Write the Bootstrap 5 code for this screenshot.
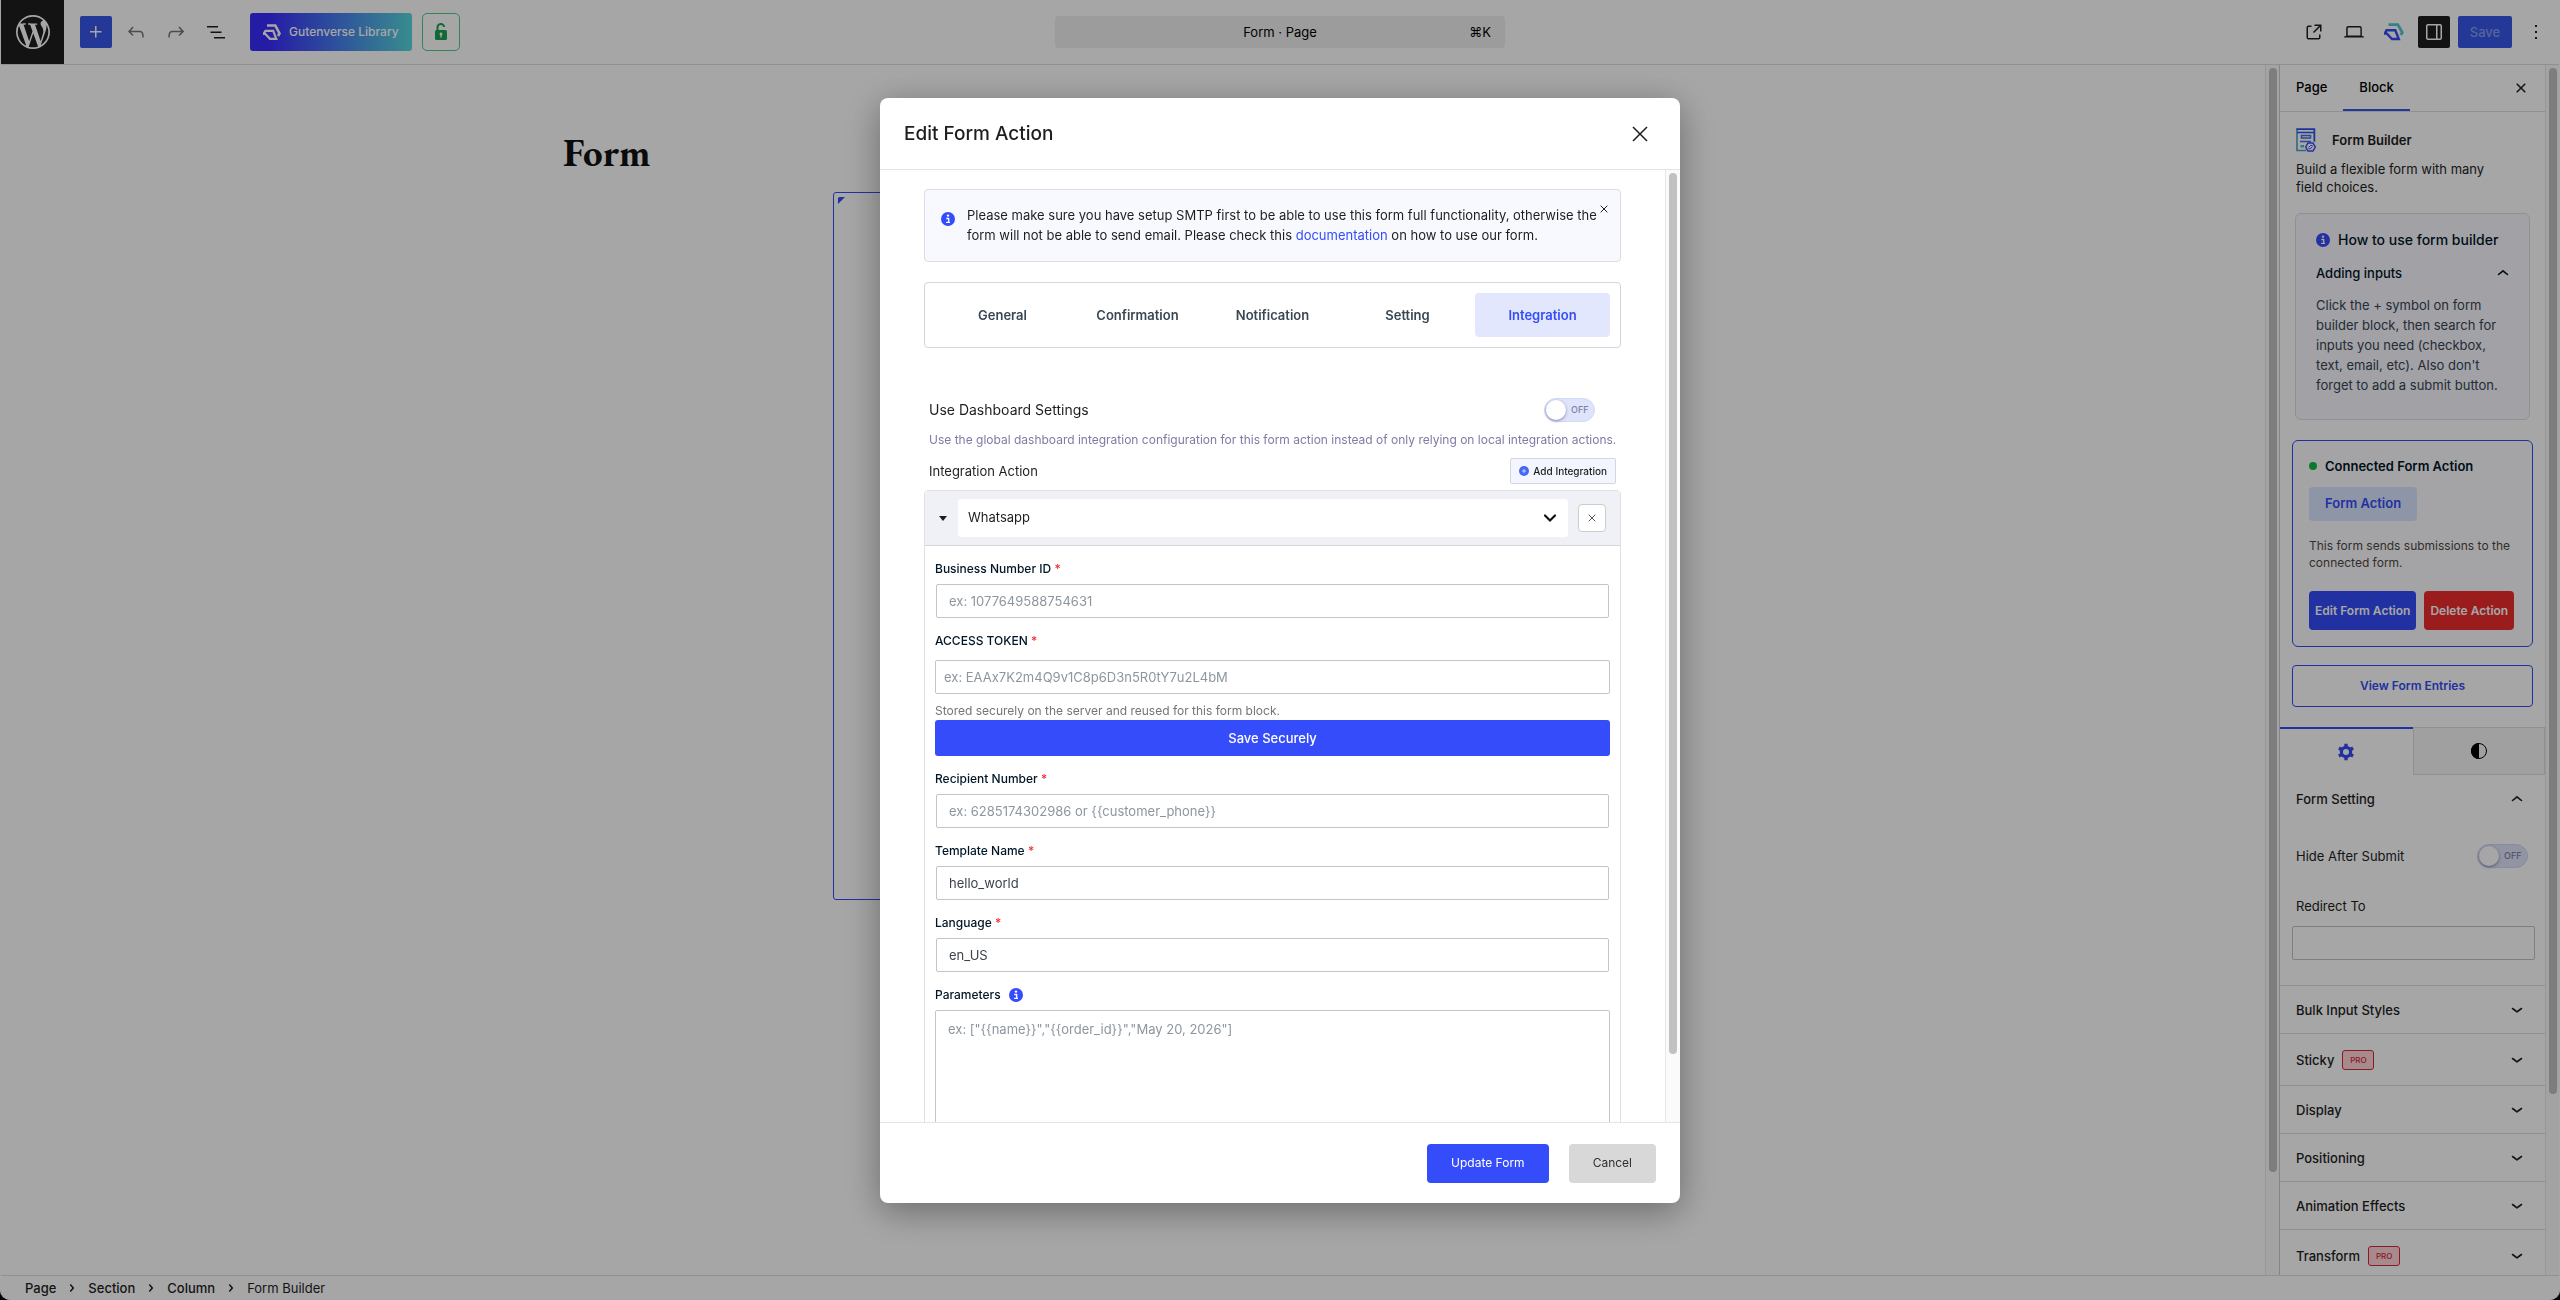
<!DOCTYPE html>
<html lang="en">
<head>
<meta charset="utf-8">
<meta name="viewport" content="width=device-width, initial-scale=1">
<title>Form · Page</title>
<link href="https://cdn.jsdelivr.net/npm/bootstrap@5.3.0/dist/css/bootstrap.min.css" rel="stylesheet">
<style>
:root { --wp-blue:#3858e9; --gv-blue:#344cf9; --line:#ddd; --ink:#1e1e1e; }
html, body { height:100%; }
body { background:#000; font-family:Inter, "Liberation Sans", sans-serif; font-size:13px; line-height:18px; color:var(--ink); }
button, input, select, textarea { font-family:inherit; }
.app-window { background:#fff; border-radius:0 0 10px 10px; border:1px solid #fff; border-width:0 1px; overflow:hidden; }
svg { display:block; flex:none; }
.side-even { flex:1 1 0; min-width:0; }

/* top bar */
.topbar { height:65px; border-bottom:1px solid var(--line); }
.wp-home { width:63px; height:64px; background:var(--ink); color:#fff; }
.tool { width:32px; height:32px; padding:0; border:0; border-radius:2px; display:flex; align-items:center; justify-content:center; color:var(--ink); background:none; }
.tool-blue { background:var(--wp-blue); color:#fff; }
.tool-dark { background:var(--ink); color:#fff; }
.tool-dim { color:#757575; }
.library-btn { height:38px; margin-left:18px; padding:0 13px; border:0; border-radius:3px; color:#fff; background:linear-gradient(90deg,#3a2cff 12%,#56d8dc); font:500 12px/20px Inter, sans-serif; gap:8px; }
.lock-btn { width:38px; height:38px; margin-left:10px; border:1px solid #55c987; border-radius:5px; color:#1ba354; padding:0; background:none; }
.doc-bar { width:450px; height:32px; background:#f0f0f0; border:0; border-radius:4px; padding:0 14px; font-size:13px; }
.save-btn { width:54px; height:32px; border:0; border-radius:2px; background:var(--wp-blue); color:#8599f2; font-size:13px; font-weight:500; padding:0; }
.tools-end > :last-child { margin-right:7px; }

/* canvas */
.page-title { font-family:"EB Garamond","Liberation Serif",serif; font-weight:700; font-size:39px; line-height:48px; margin:64px 0 0 562px; color:#111; }
.form-block { width:815px; height:708px; margin:15px 0 0 832px; border:1px solid var(--gv-blue); border-radius:3px; padding:4px; }
.rail { background:#fafafa; border-left:1px solid #e8e8e8; width:14px; padding-top:3px; flex:none; }
.rail > div { width:8px; margin-left:3px; border-radius:4px; background:#c1c1c1; }

/* settings sidebar */
.settings { width:266px; border-left:1px solid #ccc; flex:none; }
.side-tabs { height:47px; border-bottom:1px solid var(--line); padding-right:12px; }
.side-tabs .side-tab { border:0; background:none; padding:0 16px; height:46px; font-size:13px; font-weight:500; border-bottom:2px solid transparent; }
.side-tabs .side-tab.active { border-color:var(--wp-blue); }
.side-pad { padding:16px 16px 0; }
.block-name { height:24px; }
.howto { margin:17px 15px 0; padding:16px 20px 24px; background:#f8f8ff; border:1px solid #dcdce4; border-radius:6px; }
.howto h3 { font-size:14px; font-weight:500; line-height:20px; margin:0; color:#011627; white-space:nowrap; }
.howto button { border:0; background:none; padding:0; margin-top:13px; line-height:20px; font-weight:500; color:#011627; }
.howto p { margin:12px 0 0; line-height:20px; color:#364553; }
.connected { margin:20px 12px 0; padding:16px; border:1px solid var(--gv-blue); border-radius:6px; background:#fcfcff; }
.connected h3 { font-size:13px; line-height:18px; font-weight:600; margin:0; color:#011627; }
.live-dot { width:8px; height:8px; border-radius:50%; background:#0fbe3e; }
.chip { display:inline-block; margin-top:12px; height:34px; line-height:33px; padding:0 16px; background:#dbe5ff; border-radius:4px; color:var(--gv-blue); font-weight:600; }
.connected p { margin:16px 0 20px; font-size:12px; line-height:17px; color:#50483f; }
.act { height:39px; border:0; border-radius:4px; color:#fff; font-size:12px; font-weight:600; padding:0 6px; white-space:nowrap; }
.act-blue { background:var(--gv-blue); }
.act-red { background:#ef2b2b; }
.entries { display:block; margin:18px 12px 20px; height:42px; line-height:40px; border:1px solid var(--gv-blue); border-radius:4px; text-align:center; text-decoration:none; color:var(--gv-blue); font-size:12px; font-weight:600; }
.mode-tab { height:48px; border:1px solid var(--line); background:#f6f6f6; padding:0; display:flex; align-items:center; justify-content:center; color:#000; }
.mode-tab.active { background:none; border:0; border-top:2px solid var(--gv-blue); color:var(--gv-blue); }
.fold { width:100%; height:48px; border:0; background:none; padding:0 20px 0 16px; font-size:13px; font-weight:500; text-align:left; color:var(--ink); flex:none; }
.fold + .fold, .ruled { border-top:1px solid var(--line); }
.fold.tall { height:52px; }
.pro { height:20px; width:32px; border:1px solid #d9263a; border-radius:3px; background:#ffd5d8; color:#d9263a; font-size:8px; line-height:18px; text-align:center; }
.switch-row { margin:21px 17px 0 16px; height:24px; }
.switch { width:51px; height:24px; border-radius:12px; background:#dfe3fb; display:flex; align-items:center; position:relative; color:#7d84a4; font-size:9px; font-weight:500; cursor:pointer; padding-left:26px; border:1px solid #d3d8f3; }
.switch input { appearance:none; position:absolute; left:1px; top:1px; width:20px; height:20px; margin:0; border-radius:50%; background:#fff; box-shadow:0 1px 3px rgba(60,70,130,.6); }
.plain-box { height:34px; border:1px solid #c3c4c7; border-radius:2px; font-size:13px; line-height:18px; padding:7px 13px; color:#3c434a; background:#fff; }
.redirect { margin:29px 10px 25px 12px; }
.redirect label { margin:0 0 11px 4px; }

/* footer trail */
.trail { height:25px; border-top:1px solid var(--line); padding-left:24px; gap:10px; font-size:13px; font-weight:500; flex:none; }
.trail a { color:var(--ink); text-decoration:none; }

/* dialog */
.modal { background:rgba(0,0,0,.35); border-radius:0 0 10px 10px; overflow:hidden; }
.modal-dialog { max-width:800px; height:calc(100% - 195px); margin-top:98px; }
.modal-content { height:100%; border:0; border-radius:8px; box-shadow:0 8px 36px rgba(0,0,0,.36); color:var(--ink); }
.modal-header { height:72px; padding:0 28px 0 24px; border-color:#e4e4e4; flex:none; }
.modal-title { font-size:19px; font-weight:500; line-height:28px; }
.bare { border:0; background:none; padding:0; color:inherit; }
.modal-body { padding:0; overflow:hidden; display:flex; min-height:0; }
.dialog-main { flex:1; min-width:0; overflow:hidden; padding:19px 44px 0; }
.dialog-main + .rail { width:15px; }
.notice { position:relative; border:1px solid #dcdce4; border-radius:4px; background:#f8f9ff; padding:15px 16px 16px; gap:12px; }
.notice > svg { margin-top:7px; }
.notice p { margin:0; line-height:20px; flex:1; white-space:nowrap; }
.notice a { color:var(--gv-blue); text-decoration:none; }
.notice .bare { position:absolute; top:15px; right:12px; }
.tab-set { margin-top:20px; padding:10px; border:1px solid #d5d5de; border-radius:4px; height:66px; flex-wrap:nowrap; }
.tab-set .nav-link { flex:1; height:44px; padding:0; border-radius:4px; font-size:13px; font-weight:600; color:#394653; }
.tab-set .nav-link.active { background:#e2e7fe; color:var(--gv-blue); }
.dash-row { margin-top:50px; padding:0 26px 0 5px; height:24px; }
.dash-row label.title { font-size:14px; line-height:20px; }
.hint { margin:9px 5px 0; font-size:12px; color:#7e7ba3; white-space:nowrap; }
.add-row { margin:9px 5px 0; }
.add-btn { height:26px; border:1px solid #d5d5de; background:#f3f5ff; border-radius:2px; font-size:10px; font-weight:500; padding:0 8px; gap:4px; color:var(--ink); }
.panel-box { margin-top:6px; border:1px solid #dfdfe4; border-radius:4px 4px 0 0; }
.panel-top { height:55px; background:#f0f1f6; border-bottom:1px solid #d5d5de; padding:0 14px 0 13px; }
.panel-top .pick { margin:0 10px; }
.panel-top .form-select { height:38px; border:0; border-radius:3px; font-size:13px; padding:0 10px; background-image:none; color:var(--ink); }
.sel-arrow { position:absolute; right:11px; top:12px; pointer-events:none; }
.remove { width:28px; height:28px; border:1px solid #ccc; border-radius:4px; background:#fff; color:#555; padding:0; display:flex; align-items:center; justify-content:center; }
.fields { padding:14px 10px 0; }
.fields .form-label { display:block; margin:0 0 6px; font-size:12px; line-height:18px; font-weight:500; color:#011627; }
.fields .form-label.roomy { margin-bottom:10px; }
.fields .form-label span { color:#f03030; }
.fields .form-control { margin-bottom:14px; }
.fields .inset { width:calc(100% - 2px); margin-left:1px; padding-left:12px; }
.fields .form-control::placeholder { color:#8d969f; opacity:1; }
.fields textarea.form-control { height:150px; resize:none; padding:9px 12px; }
.fields .snug { margin:-6px 0 0; font-size:12px; color:#757575; }
.fields .token { padding-left:8px; }
.fields .tip { margin-top:2px; }
.secure { width:100%; height:36px; border:0; border-radius:3px; background:var(--gv-blue); color:#fff; font-size:13px; font-weight:500; margin-bottom:14px; }
.modal-footer { height:81px; padding:0 24px 0 0; gap:20px; border-color:#e4e4e4; flex:none; }
.foot-btn { height:39px; padding:0 24px; border:0; border-radius:4px; font-size:12px; margin:0; }
.foot-cancel { background:#d8d8d8; color:#2f2f2f; }
</style>
<script src="https://cdn.jsdelivr.net/npm/bootstrap@5.3.0/dist/js/bootstrap.bundle.min.js"></script>
</head>
<body>
<svg width="0" height="0" class="position-absolute" aria-hidden="true">
  <defs>
    <symbol id="i-down" viewBox="0 0 12 12"><path d="M1.500 4.500Q4 6.300 6 7.800Q8 6.300 10.500 4.500" fill="none" stroke="currentColor" stroke-width="1.600" stroke-linecap="round"/></symbol>
    <symbol id="i-up" viewBox="0 0 12 12"><path d="M1.500 7.500Q4 5.500 6 3.800Q8 5.500 10.500 7.500" fill="none" stroke="currentColor" stroke-width="1.600" stroke-linecap="round"/></symbol>
    <symbol id="i-info" viewBox="0 0 14 14"><circle cx="7" cy="7" r="7" fill="#344cf9"/><circle cx="7" cy="3.600" r="1.200" fill="#fff"/><path d="M5.300 6.500h2.400v3.500M5.100 10.300h3.900" fill="none" stroke="#fff" stroke-width="1.300"/></symbol>
    <symbol id="i-next" viewBox="6 6 12 12"><path fill="currentColor" d="M10.862 8.040l3.418 3.988-3.418 3.988-1.139-.976 2.582-3.012-2.582-3.011z"/></symbol>
    <symbol id="i-x" viewBox="0 0 12 12"><path d="M1 1l10 10M11 1L1 11" stroke="currentColor" stroke-width="1.500" fill="none"/></symbol>
  </defs>
</svg>

<div class="app-window vh-100 d-flex flex-column">
  <header class="topbar d-flex align-items-center flex-shrink-0">
    <div class="side-even d-flex align-items-center">
      <a href="#" class="wp-home d-flex align-items-center justify-content-center" aria-label="View Pages">
        <svg width="34" height="34" viewBox="0 0 24 24" fill="currentColor"><path d="M21.469 6.825c.84 1.537 1.318 3.3 1.318 5.175 0 3.979-2.156 7.456-5.363 9.325l3.295-9.527c.615-1.54.82-2.771.82-3.864 0-.405-.026-.78-.07-1.11m-7.981.105c.647-.03 1.232-.105 1.232-.105.582-.075.514-.93-.067-.899 0 0-1.755.135-2.88.135-1.064 0-2.85-.15-2.85-.15-.585-.03-.661.855-.075.885 0 0 .54.061 1.125.09l1.68 4.605-2.37 7.08L5.354 6.9c.649-.03 1.234-.1 1.234-.1.585-.075.516-.93-.065-.896 0 0-1.746.138-2.874.138-.2 0-.438-.008-.69-.015C4.911 3.15 8.235 1.215 12 1.215c2.809 0 5.365 1.072 7.286 2.833-.046-.003-.091-.009-.141-.009-1.06 0-1.812.923-1.812 1.914 0 .89.513 1.643 1.06 2.531.411.72.89 1.643.89 2.977 0 .915-.354 1.994-.821 3.479l-1.075 3.585-3.9-11.61.001.014zM12 22.784c-1.059 0-2.081-.153-3.048-.437l3.237-9.406 3.315 9.087c.024.053.05.101.078.149-1.12.393-2.325.609-3.582.609M1.211 12c0-1.564.336-3.05.935-4.39L7.29 21.709C3.694 19.96 1.212 16.271 1.211 12M12 0C5.385 0 0 5.385 0 12s5.385 12 12 12 12-5.385 12-12S18.615 0 12 0"/></svg>
      </a>
      <div class="d-flex align-items-center gap-2 ms-3">
        <button class="tool tool-blue" aria-label="Block inserter"><svg width="24" height="24" viewBox="0 0 24 24" fill="currentColor"><path d="M11 12.500V17.500H12.500V12.500H17.500V11H12.500V6H11V11H6V12.500H11Z"/></svg></button>
        <button class="tool tool-dim" aria-label="Undo"><svg width="24" height="24" viewBox="0 0 24 24" fill="currentColor"><path d="M18.3 11.7c-.6-.6-1.4-.9-2.3-.9H6.7l2.900-3.300-1.100-1-4.500 5L8.500 16l1-1-2.700-2.700H16c.5 0 .9.2 1.300.5 1 1 1 3.400 1 4.500v.3h1.500v-.2c0-1.500 0-4.300-1.500-5.700z"/></svg></button>
        <button class="tool tool-dim" aria-label="Redo"><svg width="24" height="24" viewBox="0 0 24 24" fill="currentColor"><path d="M15.6 6.500l-1.100 1 2.900 3.300H8c-.9 0-1.700.3-2.300.9-1.400 1.500-1.400 4.200-1.400 5.600v.2h1.500v-.3c0-1.100 0-3.500 1-4.500.3-.3.7-.5 1.300-.5h9.200L14.500 15l1.100 1.100 4.600-4.600-4.600-5z"/></svg></button>
        <button class="tool" aria-label="Document overview"><svg width="24" height="24" viewBox="0 0 24 24" fill="currentColor"><path d="M3 6h11v1.500H3V6Zm3.500 5.500h11V13h-11v-1.500ZM21 17H10v1.500h11V17Z"/></svg></button>
      </div>
      <button class="library-btn d-flex align-items-center"><svg width="18" height="17" viewBox="0 0 18 17" fill="none" stroke="#fff"><path d="M4 1.500H12.300L16.500 9.500L15 12" stroke-width="2.600"/><path d="M4.800 6.800H10.200L13.300 14.800H7L2.200 9.800H.5L2.500 6.800z" stroke-width="2.200"/></svg>Gutenverse Library</button>
      <button class="lock-btn d-flex align-items-center justify-content-center" aria-label="Unlock"><svg width="14" height="18" viewBox="0 0 14 18"><path d="M3.500 8V4.600a3.300 3.300 0 0 1 6.600-.6" fill="none" stroke="currentColor" stroke-width="2"/><rect x="1" y="7" width="12" height="10" rx="1.500" fill="currentColor"/><circle cx="7" cy="11" r="1.400" fill="#fff"/><path d="M7 11v3.500" stroke="#fff" stroke-width="1.300"/></svg></button>
    </div>
    <button class="doc-bar d-flex align-items-center"><span class="side-even"></span><span>Form · Page</span><span class="side-even text-end">⌘K</span></button>
    <div class="side-even tools-end d-flex align-items-center justify-content-end gap-2">
      <button class="tool" aria-label="View page"><svg width="24" height="24" viewBox="0 0 24 24" fill="currentColor"><path d="M19.500 4.500h-7V6h4.440l-5.970 5.970 1.060 1.060L18 7.060v4.440h1.500v-7Zm-13 1a2 2 0 0 0-2 2v10a2 2 0 0 0 2 2h10a2 2 0 0 0 2-2v-3H17v3a.5.5 0 0 1-.5.5h-10a.5.5 0 0 1-.5-.5v-10a.5.5 0 0 1 .5-.5h3V5.500h-3Z"/></svg></button>
      <button class="tool" aria-label="Preview"><svg width="24" height="24" viewBox="0 0 24 24" fill="currentColor"><path d="M20.500 16h-.7V8c0-1.100-.9-2-2-2H6.200c-1.100 0-2 .9-2 2v8h-.7c-.8 0-1.500.7-1.500 1.500h20c0-.8-.7-1.500-1.500-1.500zM5.700 8c0-.3.2-.5.5-.5h11.700c.3 0 .5.2.5.5v7.600H5.700V8z"/></svg></button>
      <button class="tool" aria-label="Gutenverse"><svg width="20" height="18" viewBox="0 0 20 18" fill="none"><path d="M4.500 1.600H13.800L18.300 9.500L16.800 12" stroke="#52c8cc" stroke-width="2.800"/><path d="M4.800 7.300H11.300L14.800 16H8L2.700 10.500H.8L2.500 7.300z" stroke="#344cf9" stroke-width="2.400"/></svg></button>
      <button class="tool tool-dark" aria-label="Settings"><svg width="24" height="24" viewBox="0 0 24 24" fill="currentColor"><path fill-rule="evenodd" d="M18 4H6c-1.100 0-2 .9-2 2v12c0 1.100.9 2 2 2h12c1.100 0 2-.9 2-2V6c0-1.100-.9-2-2-2zm-4 14.500H6c-.3 0-.5-.2-.5-.5V6c0-.3.2-.5.5-.5h8v13zm4.500-.5c0 .3-.2.5-.5.5h-2.500v-13H18c.3 0 .5.2.5.5v12z"/></svg></button>
      <button class="save-btn">Save</button>
      <button class="tool" aria-label="Options"><svg width="24" height="24" viewBox="0 0 24 24" fill="currentColor"><path d="M13 19h-2v-2h2v2zm0-6h-2v-2h2v2zm0-6h-2V5h2v2z"/></svg></button>
    </div>
  </header>

  <div class="d-flex flex-fill overflow-hidden">
    <main class="flex-fill overflow-hidden">
      <h1 class="page-title">Form</h1>
      <section class="form-block" aria-label="Form Builder"><svg width="7" height="7" viewBox="0 0 7 7"><path d="M0 7V1.500Q0 0 1.500 0H7z" fill="#344cf9"/></svg></section>
    </main>
    <div class="rail"><div style="height:91.500%"></div></div>

    <aside class="settings overflow-hidden d-flex flex-column">
      <div class="side-tabs d-flex align-items-center flex-shrink-0">
        <button class="side-tab">Page</button>
        <button class="side-tab active">Block</button>
        <button class="bare ms-auto" aria-label="Close settings"><svg width="24" height="24" viewBox="0 0 24 24" fill="currentColor"><path d="M12 13.060l3.712 3.713 1.061-1.060L13.061 12l3.712-3.712-1.060-1.060L12 10.938 8.288 7.227l-1.061 1.060L10.939 12l-3.712 3.712 1.060 1.061L12 13.061z"/></svg></button>
      </div>
      <div class="side-pad">
        <div class="block-name d-flex align-items-center gap-3">
          <svg width="20" height="24" viewBox="0 0 20 24" fill="none"><path d="M10 22.500H1V1h17.500V14" stroke="#4a9fd0" stroke-width="1.600"/><path d="M.5 1.200h18.500M1 4.500h17.500M18.300 1v12" stroke="#344cf9" stroke-width="1.500"/><path d="M5.500 7.500h9v2.500h-9zM4 13.500h11" stroke="#3f6fe6" stroke-width="1.500"/><path d="M4.500 17h3.500v2.500H4.500z" fill="#52b8cc"/><path d="M12 15h5l2.300 4-2.300 4h-5l-2.300-4z" stroke="#344cf9" stroke-width="1.500"/><path d="M12.500 19.500l2-2h2M16.500 18.500l-2 2.200h-2" stroke="#344cf9"/></svg>
          <span class="fw-semibold">Form Builder</span>
        </div>
        <div class="mt-2">Build a flexible form with many<br>field choices.</div>
      </div>
      <section class="howto">
        <div class="d-flex align-items-center gap-2"><svg width="14" height="14"><use href="#i-info"/></svg><h3>How to use form builder</h3></div>
        <button class="d-flex w-100 align-items-center justify-content-between">Adding inputs<svg width="12" height="12"><use href="#i-up"/></svg></button>
        <p>Click the + symbol on form<br>builder block, then search for<br>inputs you need (checkbox,<br>text, email, etc). Also don't<br>forget to add a submit button.</p>
      </section>
      <section class="connected">
        <div class="d-flex align-items-center gap-2"><span class="live-dot"></span><h3>Connected Form Action</h3></div>
        <span class="chip">Form Action</span>
        <p>This form sends submissions to the<br>connected form.</p>
        <div class="d-flex gap-2"><button class="act act-blue">Edit Form Action</button><button class="act act-red">Delete Action</button></div>
      </section>
      <a href="#" class="entries flex-shrink-0">View Form Entries</a>
      <div class="d-flex flex-shrink-0">
        <button class="mode-tab active w-50" aria-label="General"><svg width="18" height="18" viewBox="0 0 18 18"><circle cx="9" cy="9" r="4.600" fill="none" stroke="currentColor" stroke-width="3.200"/><path d="M9 .8v3.200M9 14v3.200M1.900 4.900l2.800 1.600M13.300 11.500l2.800 1.600M1.900 13.100l2.800-1.600M13.300 6.500l2.800-1.600" stroke="currentColor" stroke-width="3.400"/></svg></button>
        <button class="mode-tab w-50" aria-label="Style"><svg width="16" height="16" viewBox="0 0 16 16"><circle cx="8" cy="8" r="7.500" fill="none" stroke="currentColor"/><path d="M8 0a8 8 0 0 0 0 16z" fill="currentColor"/></svg></button>
      </div>
      <button class="fold d-flex align-items-center justify-content-between">Form Setting<svg width="16" height="12"><use href="#i-up"/></svg></button>
      <div class="switch-row d-flex align-items-center justify-content-between flex-shrink-0">
        <span id="hide-label">Hide After Submit</span>
        <label class="switch"><input type="checkbox" aria-labelledby="hide-label">OFF</label>
      </div>
      <div class="redirect">
        <label for="redirect" class="d-block">Redirect To</label>
        <input id="redirect" type="text" class="form-control plain-box">
      </div>
      <button class="fold ruled d-flex align-items-center justify-content-between">Bulk Input Styles<svg width="16" height="12"><use href="#i-down"/></svg></button>
      <button class="fold tall d-flex align-items-center">Sticky<span class="pro ms-2">PRO</span><svg class="ms-auto" width="16" height="12"><use href="#i-down"/></svg></button>
      <button class="fold d-flex align-items-center justify-content-between">Display<svg width="16" height="12"><use href="#i-down"/></svg></button>
      <button class="fold d-flex align-items-center justify-content-between">Positioning<svg width="16" height="12"><use href="#i-down"/></svg></button>
      <button class="fold d-flex align-items-center justify-content-between">Animation Effects<svg width="16" height="12"><use href="#i-down"/></svg></button>
      <button class="fold tall d-flex align-items-center">Transform<span class="pro ms-2">PRO</span><svg class="ms-auto" width="16" height="12"><use href="#i-down"/></svg></button>
    </aside>
    <div class="rail"><div style="height:85%"></div></div>
  </div>

  <nav class="trail d-flex align-items-center" aria-label="Block breadcrumb">
    <a href="#">Page</a><svg width="12" height="12"><use href="#i-next"/></svg>
    <a href="#">Section</a><svg width="12" height="12"><use href="#i-next"/></svg>
    <a href="#">Column</a><svg width="12" height="12"><use href="#i-next"/></svg>
    <span class="fw-normal">Form Builder</span>
  </nav>
</div>

<div class="modal d-block" role="dialog" aria-labelledby="dlg-title">
  <div class="modal-dialog">
    <div class="modal-content">
      <div class="modal-header">
        <h2 class="modal-title" id="dlg-title">Edit Form Action</h2>
        <button class="bare" aria-label="Close"><svg width="24" height="24" viewBox="0 0 24 24" fill="currentColor"><path d="m13.060 12 6.470-6.470-1.060-1.060L12 10.940 5.530 4.470 4.470 5.530 10.940 12l-6.470 6.470 1.060 1.060L12 13.060l6.470 6.470 1.060-1.060L13.060 12Z"/></svg></button>
      </div>
      <div class="modal-body">
        <div class="dialog-main">
          <div class="notice d-flex align-items-start">
            <svg width="14" height="14"><use href="#i-info"/></svg>
            <p>Please make sure you have setup SMTP first to be able to use this form full functionality, otherwise the<br>form will not be able to send email. Please check this <a href="#">documentation</a> on how to use our form.</p>
            <button class="bare" aria-label="Dismiss"><svg width="8" height="8"><use href="#i-x"/></svg></button>
          </div>
          <nav class="nav nav-pills tab-set">
            <button class="nav-link">General</button><button class="nav-link">Confirmation</button><button class="nav-link">Notification</button><button class="nav-link">Setting</button><button class="nav-link active">Integration</button>
          </nav>
          <div class="dash-row d-flex align-items-center justify-content-between">
            <label class="title" for="use-dash">Use Dashboard Settings</label>
            <label class="switch"><input type="checkbox" id="use-dash">OFF</label>
          </div>
          <p class="hint">Use the global dashboard integration configuration for this form action instead of only relying on local integration actions.</p>
          <div class="add-row d-flex align-items-center justify-content-between">
            <span>Integration Action</span>
            <button class="add-btn d-flex align-items-center"><svg width="10" height="10" viewBox="0 0 10 10"><circle cx="5" cy="5" r="5" fill="#4469f5"/><path d="M5 3v4M3 5h4" stroke="#c9d4ff"/></svg>Add Integration</button>
          </div>
          <div class="panel-box">
            <div class="panel-top d-flex align-items-center">
              <button class="bare" aria-label="Collapse"><svg width="10" height="7" viewBox="0 0 10 7"><path d="M1 1h8L5 6z" fill="currentColor"/></svg></button>
              <div class="pick position-relative flex-fill">
                <select class="form-select" aria-label="Integration"><option>Whatsapp</option></select>
                <svg class="sel-arrow" width="14" height="14" viewBox="0 0 14 14"><path d="M2 4.500l5 5 5-5" fill="none" stroke="#111" stroke-width="2.200" stroke-linecap="round"/></svg>
              </div>
              <button class="remove" aria-label="Remove"><svg width="8" height="8"><use href="#i-x"/></svg></button>
            </div>
            <div class="fields">
              <label class="form-label" for="f-id">Business Number ID <span>*</span></label>
              <input id="f-id" type="text" class="form-control plain-box inset" placeholder="ex: 1077649588754631">
              <label class="form-label roomy" for="f-token">ACCESS TOKEN <span>*</span></label>
              <input id="f-token" type="text" class="form-control plain-box token" placeholder="ex: EAAx7K2m4Q9v1C8p6D3n5R0tY7u2L4bM">
              <p class="snug">Stored securely on the server and reused for this form block.</p>
              <button class="secure">Save Securely</button>
              <label class="form-label" for="f-rec">Recipient Number <span>*</span></label>
              <input id="f-rec" type="text" class="form-control plain-box inset" placeholder="ex: 6285174302986 or {{customer_phone}}">
              <label class="form-label" for="f-tpl">Template Name <span>*</span></label>
              <input id="f-tpl" type="text" class="form-control plain-box inset" value="hello_world">
              <label class="form-label" for="f-lang">Language <span>*</span></label>
              <input id="f-lang" type="text" class="form-control plain-box inset" value="en_US">
              <div class="d-flex gap-2"><label class="form-label" for="f-par">Parameters</label><svg class="tip" width="14" height="14"><use href="#i-info"/></svg></div>
              <textarea id="f-par" class="form-control plain-box" placeholder='ex: ["{{name}}","{{order_id}}","May 20, 2026"]'></textarea>
            </div>
          </div>
        </div>
        <div class="rail"><div style="height:92.800%"></div></div>
      </div>
      <div class="modal-footer">
        <button class="foot-btn act-blue text-white">Update Form</button>
        <button class="foot-btn foot-cancel">Cancel</button>
      </div>
    </div>
  </div>
</div>
</body>
</html>
